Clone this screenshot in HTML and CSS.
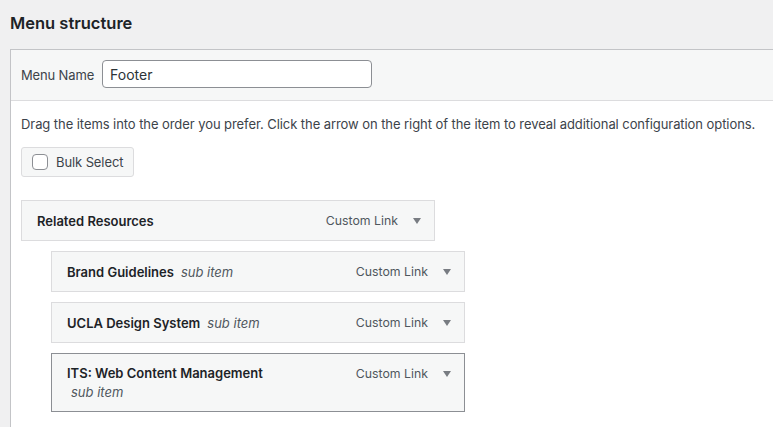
FILE: index.html
```html
<!DOCTYPE html>
<html>
<head>
<meta charset="utf-8">
<link rel="stylesheet" href="styles.css">
</head>
<body>
<h2 class="title">Menu structure</h2>
<div class="panel">
  <div class="panel-head">
    <label class="name-label">Menu Name</label>
    <input class="name-input" type="text" value="Footer">
  </div>
  <div class="panel-body">
    <p class="hint">Drag the items into the order you prefer. Click the arrow on the right of the item to reveal additional configuration options.</p>
    <button class="bulk"><span class="check"></span>Bulk Select</button>
    <ul class="menu">
      <li class="item">
        <div class="item-title"><span class="name">Related Resources</span></div>
        <div class="controls"><span class="type">Custom Link</span><span class="arrow"></span></div>
      </li>
      <li class="item sub">
        <div class="item-title"><span class="name">Brand Guidelines</span><span class="subtag">sub item</span></div>
        <div class="controls"><span class="type">Custom Link</span><span class="arrow"></span></div>
      </li>
      <li class="item sub">
        <div class="item-title"><span class="name">UCLA Design System</span><span class="subtag">sub item</span></div>
        <div class="controls"><span class="type">Custom Link</span><span class="arrow"></span></div>
      </li>
      <li class="item sub tall">
        <div class="item-title stacked"><span class="name">ITS: Web Content Management</span><span class="subtag">sub item</span></div>
        <div class="controls"><span class="type">Custom Link</span><span class="arrow"></span></div>
      </li>
    </ul>
  </div>
</div>
</body>
</html>
```
FILE: styles.css
```css
html, body {
  margin: 0;
  padding: 0;
}
body {
  background: #f0f0f1;
  font-family: Inter, "Noto Sans", "Liberation Sans", sans-serif;
  font-size: 13px;
  color: #3c434a;
  overflow: hidden;
  height: 100vh;
}
.title {
  margin: 0;
  padding: 11px 10px 0;
  height: 38px;
  font-size: 16.5px;
  font-weight: 600;
  color: #1d2327;
  line-height: 24px;
}
.panel {
  box-sizing: border-box;
  margin-left: 10px;
  border: 1px solid #c3c4c7;
  border-right: none;
  border-bottom: none;
  background: #fff;
  height: calc(100vh - 49px);
}
.panel-head {
  display: flex;
  align-items: center;
  height: 50px;
  padding: 0 10px;
  background: #f6f7f7;
  border-bottom: 1px solid #dcdcde;
}
.name-label {
  color: #3c434a;
  margin-right: 8px;
  letter-spacing: -0.15px;
}
.name-input {
  box-sizing: border-box;
  width: 270px;
  height: 28px;
  border: 1px solid #8c8f94;
  border-radius: 4px;
  padding: 0 7px;
  font-family: inherit;
  font-size: 14px;
  color: #2c3338;
  background: #fff;
  margin-top: -2px;
}
.panel-body {
  padding: 0 10px;
}
.hint {
  margin: 14px 0 0;
  line-height: 19px;
  color: #3c434a;
  white-space: nowrap;
  letter-spacing: -0.07px;
}
.bulk {
  display: flex;
  align-items: center;
  box-sizing: border-box;
  height: 30px;
  margin-top: 13px;
  padding: 0 10px 0 10px;
  border: 1px solid #dcdcde;
  border-radius: 3px;
  background: #f6f7f7;
  font-family: inherit;
  font-size: 13px;
  color: #3c434a;
  letter-spacing: -0.1px;
}
.check {
  box-sizing: border-box;
  width: 16px;
  height: 16px;
  border: 1px solid #8c8f94;
  border-radius: 4px;
  background: #fff;
  margin-right: 8px;
}
.menu {
  list-style: none;
  margin: 23px 0 0;
  padding: 0;
  display: flex;
  flex-direction: column;
  gap: 10px;
}
.item {
  box-sizing: border-box;
  width: 414px;
  height: 41px;
  display: flex;
  align-items: center;
  justify-content: space-between;
  padding: 0 13px 0 15px;
  border: 1px solid #dcdcde;
  background: #f6f7f7;
}
.item.sub {
  margin-left: 30px;
}
.item.tall {
  height: 59px;
  align-items: flex-start;
  padding-top: 10px;
  border-color: #8c8f94;
}
.item-title {
  display: flex;
  align-items: baseline;
}
.item-title.stacked {
  flex-direction: column;
  align-items: flex-start;
}
.name {
  font-weight: 600;
  color: #1d2327;
}
.stacked .name {
  line-height: 19px;
}
.subtag {
  font-style: italic;
  color: #50575e;
  margin-left: 7px;
}
.stacked .subtag {
  margin-left: 4px;
  line-height: 18px;
}
.controls {
  display: flex;
  align-items: center;
}
.tall .controls {
  margin-top: 2px;
}
.type {
  color: #50575e;
  font-size: 12.3px;
  margin-right: 15px;
}
.arrow {
  width: 0;
  height: 0;
  border-left: 4px solid transparent;
  border-right: 4px solid transparent;
  border-top: 6px solid #787c82;
}
```
